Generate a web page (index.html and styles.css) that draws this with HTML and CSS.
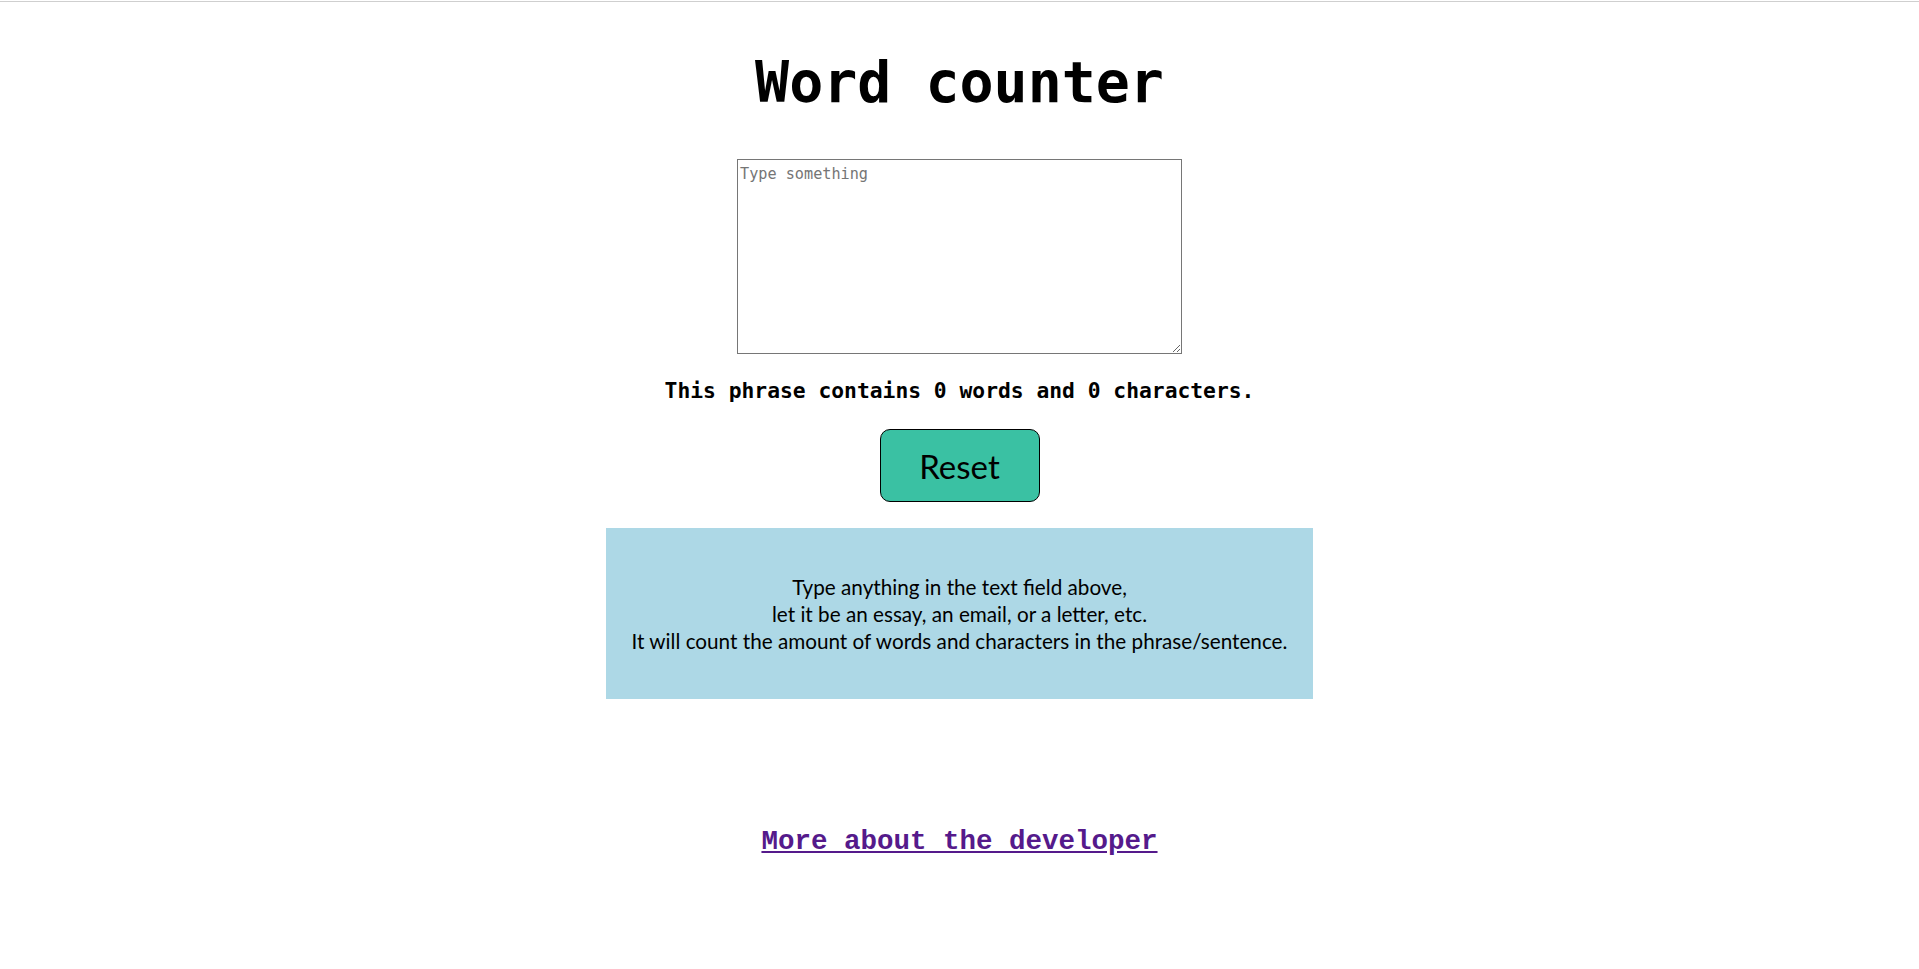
FILE: index.html
```html
<!DOCTYPE html>
<html lang="en">
<head>
<meta charset="utf-8">
<title>Word counter</title>
<link rel="stylesheet" href="styles.css">
</head>
<body>
<div class="topline"></div>
<main class="page">
  <h1 class="title">Word counter</h1>
  <textarea class="input" placeholder="Type something"></textarea>
  <p class="count">This phrase contains 0 words and 0 characters.</p>
  <button class="reset" type="button">Reset</button>
  <section class="info">
    <p>Type anything in the text field above,<br>let it be an essay, an email, or a letter, etc.<br>It will count the amount of words and characters in the phrase/sentence.</p>
  </section>
  <a class="dev" href="#">More about the developer</a>
</main>
</body>
</html>
```

FILE: styles.css
```css
html, body {
  margin: 0;
  padding: 0;
  background: #ffffff;
}

.topline {
  height: 1px;
  margin-top: 1px;
  background: #cfcfcf;
}

.page {
  display: flex;
  flex-direction: column;
  align-items: center;
}

.title {
  margin: 48px 0 0;
  font-family: "DejaVu Sans Mono", monospace;
  font-weight: bold;
  font-size: 56.6px;
  line-height: 64px;
  color: #000;
}

.input {
  box-sizing: border-box;
  margin: 45px 0 0;
  width: 445px;
  height: 195px;
  padding: 2px;
  border: 1px solid #767676;
  font-family: "DejaVu Sans Mono", monospace;
  font-size: 15.2px;
  line-height: 24px;
}

.input::placeholder {
  color: #757575;
}

.count {
  margin: 24px 0 0;
  font-family: "DejaVu Sans Mono", monospace;
  font-weight: bold;
  font-size: 21.3px;
  line-height: 25px;
  color: #000;
}

.reset {
  box-sizing: border-box;
  margin: 26px 0 0;
  width: 160px;
  height: 73px;
  padding: 0;
  border: 1px solid #000;
  border-radius: 10px;
  background: #3ac1a3;
  font-family: Lato, "Open Sans", sans-serif;
  font-size: 33px;
  color: #000;
  display: flex;
  align-items: center;
  justify-content: center;
}

.info {
  box-sizing: border-box;
  margin-top: 26px;
  width: 707px;
  height: 171px;
  padding-top: 46px;
  background: #add8e6;
  text-align: center;
}

.info p {
  margin: 0;
  font-family: Lato, "Open Sans", sans-serif;
  font-size: 20.7px;
  line-height: 26.9px;
  color: #000;
}

.dev {
  margin-top: 126.5px;
  font-family: "Liberation Mono", "Courier New", monospace;
  font-weight: bold;
  font-size: 27.5px;
  color: #551a8b;
  text-decoration: underline;
}
```
